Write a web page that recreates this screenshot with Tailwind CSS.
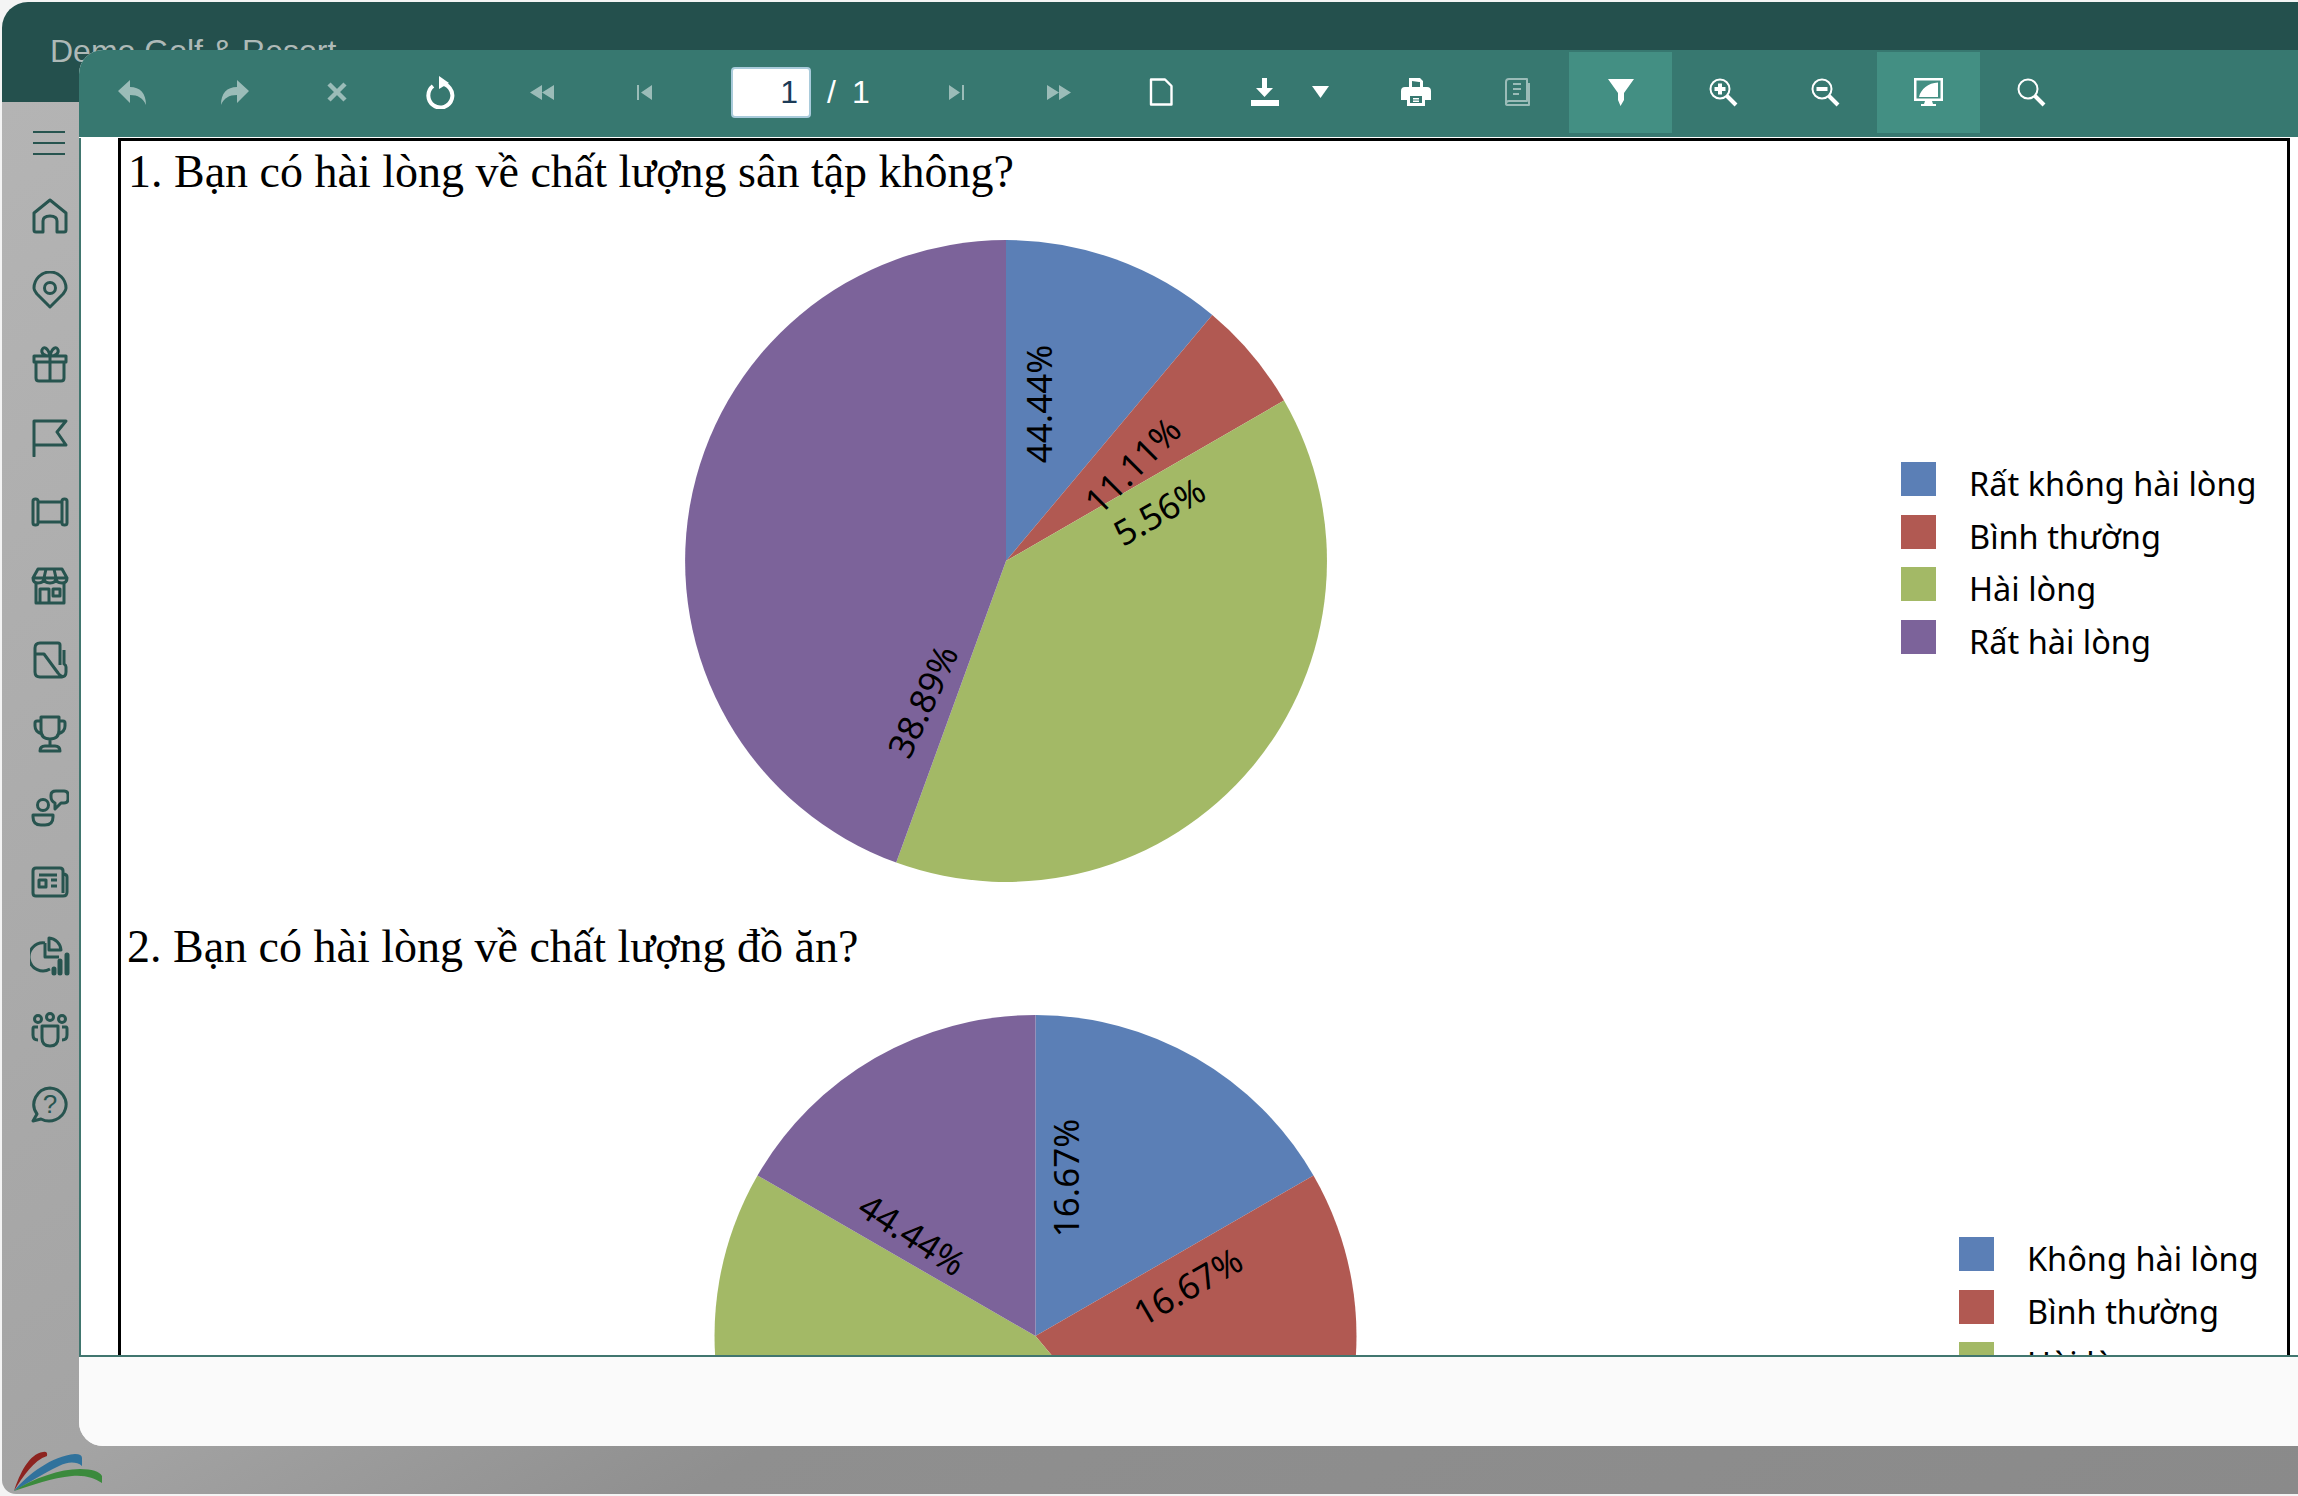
<!DOCTYPE html>
<html lang="en">
<head>
	<meta charset="UTF-8">
	<title>Demo Golf &amp; Resort</title>
	<script src="https://cdn.jsdelivr.net/npm/@tailwindcss/browser@4"></script>
</head>
<body class="bg-[#f4f4f4] w-[2298px] h-[1496px] overflow-hidden relative font-['Liberation_Sans',sans-serif]">
	<!-- page behind the dialog -->
	<div class="flex flex-col w-[2296px] h-[1492px] ml-[2px] mt-[2px] rounded-tl-[26px] rounded-bl-[14px] overflow-hidden">
		<div class="h-[100px] shrink-0 bg-[#24504d] pl-[48px] pt-[31px]">
			<span class="text-[32px] leading-[36px] text-[#aeb9b7]">Demo Golf &amp; Resort</span>
		</div>
		<div class="flex-1 bg-[linear-gradient(to_bottom_right,#b4b4b4,#a4a4a4_50%,#8f8f8f_65%,#8a8a8a)] relative">
			<div class="flex flex-col items-center w-[96px] pt-[3px] text-[#27544f]">
				<div class="h-[74px] flex items-start justify-center w-full pt-[25px] pr-[2px]">
					<svg width="34" height="26" viewBox="0 0 34 26" fill="none" stroke="currentColor" stroke-width="2.2"><path d="M1 2H33M1 13H33M1 24H33"/></svg>
				</div>
				<div class="h-[74px] flex items-center justify-center w-full">
					<svg width="36" height="36" viewBox="0 0 36 36" fill="none" stroke="currentColor" stroke-width="3" stroke-linejoin="round"><path d="M18 2L34 15V32Q34 34 32 34H25V23Q25 18 18 18Q11 18 11 23V34H4Q2 34 2 32V15Z"/></svg>
				</div>
				<div class="h-[74px] flex items-center justify-center w-full">
					<svg width="36" height="38" viewBox="0 0 36 38" fill="none" stroke="currentColor" stroke-width="3" stroke-linejoin="round"><path d="M18 36L5 23Q2 19 2 17A16 16 0 0 1 34 17Q34 19 31 23Z"/><circle cx="18" cy="17" r="5.5"/></svg>
				</div>
				<div class="h-[74px] flex items-center justify-center w-full">
					<svg width="36" height="38" viewBox="0 0 36 38" fill="none" stroke="currentColor" stroke-width="3" stroke-linejoin="round"><path d="M2 11H34V17H2ZM4 17V33Q4 36 7 36H29Q32 36 32 33V17M18 11V36M18 11C12 11 9 8 10 5C11 1 16 2 18 11C20 2 25 1 26 5C27 8 24 11 18 11Z"/></svg>
				</div>
				<div class="h-[74px] flex items-center justify-center w-full">
					<svg width="36" height="38" viewBox="0 0 36 38" fill="none" stroke="currentColor" stroke-width="3" stroke-linejoin="round" stroke-linecap="round"><path d="M2 37V2H34L25 13L34 26H2"/></svg>
				</div>
				<div class="h-[74px] flex items-center justify-center w-full">
					<svg width="38" height="30" viewBox="0 0 38 30" fill="none" stroke="currentColor" stroke-width="3" stroke-linejoin="round"><path d="M7 5H31M7 25H31"/><path d="M2 4Q2 2 4.5 2Q7 2 7 4V26Q7 28 4.5 28Q2 28 2 26ZM31 4Q31 2 33.5 2Q36 2 36 4V26Q36 28 33.5 28Q31 28 31 26Z"/></svg>
				</div>
				<div class="h-[74px] flex items-center justify-center w-full">
					<svg width="38" height="38" viewBox="0 0 38 38" fill="none" stroke="currentColor" stroke-width="3" stroke-linejoin="round"><path d="M7 2H31L36 11Q36 16 31 16Q25 16 25 11Q25 16 19 16Q13 16 13 11Q13 16 7 16Q2 16 2 11ZM13 11L15 2M25 11L23 2M2 11H36"/><path d="M5 16V36H33V16M9 36V22H18V36M22 22H29V29H22Z"/></svg>
				</div>
				<div class="h-[74px] flex items-center justify-center w-full">
					<svg width="36" height="38" viewBox="0 0 36 38" fill="none" stroke="currentColor" stroke-width="3" stroke-linejoin="round"><path d="M28 24V4Q28 2 26 2H8Q3 2 3 7V31Q3 36 8 36H29Q34 36 34 31V26Q34 24 32 23V9M3 13H12L26 32Q28 35 31 36"/></svg>
				</div>
				<div class="h-[74px] flex items-center justify-center w-full">
					<svg width="34" height="38" viewBox="0 0 34 38" fill="none" stroke="currentColor" stroke-width="3" stroke-linejoin="round"><path d="M8 2H26V15Q26 24 17 24Q8 24 8 15ZM8 6H4Q2 6 2 8V11Q2 17 9 19M26 6H30Q32 6 32 8V11Q32 17 25 19M17 24V31M7 36Q7 31 12 31H22Q27 31 27 36Z"/></svg>
				</div>
				<div class="h-[74px] flex items-center justify-center w-full">
					<svg width="38" height="38" viewBox="0 0 38 38" fill="none" stroke="currentColor" stroke-width="3" stroke-linejoin="round"><path d="M25 2H33Q37 2 37 6V10Q37 14 33 14H30L24 20L24 14Q20 12 20 8V6Q20 2 25 2Z"/><circle cx="12" cy="16" r="5.5"/><path d="M2 26H22V28Q22 36 14 36H10Q2 36 2 28Z"/></svg>
				</div>
				<div class="h-[74px] flex items-center justify-center w-full">
					<svg width="38" height="32" viewBox="0 0 38 32" fill="none" stroke="currentColor" stroke-width="3" stroke-linejoin="round"><path d="M32 8V5Q32 2 29 2H5Q2 2 2 5V27Q2 30 5 30H32Q36 30 36 26V11Q36 8 32 8V27"/><path d="M8 9H26M8 14H15V21H8ZM20 14H26M20 20H26"/></svg>
				</div>
				<div class="h-[74px] flex items-center justify-center w-full">
					<svg width="40" height="40" viewBox="0 0 40 40" fill="none" stroke="currentColor" stroke-width="3" stroke-linejoin="round"><path d="M15 7A14 14 0 1 0 20 33M15 7V21H29M19 2A13 13 0 0 1 31 14H19Z"/><path d="M24 37V33M30 37V25M37 37V19" stroke-width="5" stroke-linecap="round"/></svg>
				</div>
				<div class="h-[74px] flex items-center justify-center w-full">
					<svg width="38" height="36" viewBox="0 0 38 36" fill="none" stroke="currentColor" stroke-width="3" stroke-linejoin="round"><circle cx="19" cy="5" r="3.5"/><circle cx="7" cy="7" r="3.5"/><circle cx="31" cy="7" r="3.5"/><path d="M11 14H27V26Q27 34 19 34Q11 34 11 26ZM7 15H3Q2 15 2 17V23Q2 28 7 28M31 15H35Q36 15 36 17V23Q36 28 31 28"/></svg>
				</div>
				<div class="h-[74px] flex items-center justify-center w-full">
					<svg width="38" height="37" viewBox="0 0 38 37" fill="none" stroke="currentColor" stroke-width="3" stroke-linejoin="round"><path d="M19 2A17 16.5 0 1 1 10 33L2 35L6 28A17 16.5 0 0 1 19 2Z"/><text x="19" y="27" text-anchor="middle" font-size="26" fill="currentColor" stroke="none" font-family="Liberation Sans">?</text></svg>
				</div>
			</div>
			<!-- logo -->
			<svg class="absolute left-[10px] bottom-[2px]" width="96" height="44" viewBox="0 0 96 44">
				<path d="M2 43C8 25 17 6 31 4Q36 3 35 8C22 12 11 28 2 43Z" fill="#8d2420"/>
				<path d="M2 43C16 26 40 8 63 6Q70 6 70 10V18C64 13 55 14 47 18C32 25 16 35 2 43Z" fill="#30729c"/>
				<path d="M2 43C22 30 48 21 68 21Q86 21 90 28V35C82 30 74 27 60 28C40 30 20 37 2 43Z" fill="#3b8a3c"/>
			</svg>
		</div>
	</div>

	<!-- report dialog -->
	<div class="absolute left-[79px] top-[50px] right-0 bottom-[50px] flex flex-col rounded-tl-[24px] rounded-bl-[24px] overflow-hidden bg-[#fafafa]">
		<div class="h-[88px] shrink-0 bg-[#377870] flex items-center pl-[2px] pb-[3px] border-b border-white text-white">
			<button class="w-[102.5px] h-full flex items-center justify-center opacity-50">
				<svg width="28" height="25" viewBox="0 0 28 25" fill="currentColor"><path d="M0 11L12 0V7C22 7 28 13 28 25C25 18 20 15 12 15V23Z"/></svg>
			</button>
			<button class="w-[102.5px] h-full flex items-center justify-center opacity-50">
				<svg width="28" height="25" viewBox="0 0 28 25" fill="currentColor"><path d="M28 11L16 0V7C6 7 0 13 0 25C3 18 8 15 16 15V23Z"/></svg>
			</button>
			<button class="w-[102.5px] h-full flex items-center justify-center opacity-50">
				<svg width="20" height="20" viewBox="0 0 20 20" fill="none" stroke="currentColor" stroke-width="4.5"><path d="M2 2L18 18M18 2L2 18"/></svg>
			</button>
			<button class="w-[102.5px] h-full flex items-center justify-center">
				<svg width="30" height="33" viewBox="0 0 30 33" fill="none" stroke="currentColor" stroke-width="4"><path d="M8 10A12 12 0 1 0 15 7.5"/><path d="M14 0L24 7L14 13Z" fill="currentColor" stroke="none"/></svg>
			</button>
			<button class="w-[102.5px] h-full flex items-center justify-center opacity-50">
				<svg width="24" height="15" viewBox="0 0 24 15" fill="currentColor"><path d="M12 0V15L0 7.5ZM24 0V15L12 7.5Z"/></svg>
			</button>
			<button class="w-[102.5px] h-full flex items-center justify-center opacity-50">
				<svg width="15" height="15" viewBox="0 0 15 15" fill="currentColor"><path d="M0 0H2V15H0ZM15 0V15L4 7.5Z"/></svg>
			</button>
			<div class="w-[209px] h-full flex items-center pl-[35px]">
				<input value="1" class="w-[80px] h-[51px] bg-white rounded-[4px] border-2 border-[#a9cbdb] text-right pr-[11px] text-[32px] text-[#1c3b57]">
				<span class="ml-[16px] text-[32px] leading-none">/</span>
				<span class="ml-[16px] text-[32px] leading-none">1</span>
			</div>
			<button class="w-[102.5px] h-full flex items-center justify-center opacity-50">
				<svg width="15" height="15" viewBox="0 0 15 15" fill="currentColor"><path d="M13 0H15V15H13ZM0 0V15L11 7.5Z"/></svg>
			</button>
			<button class="w-[102.5px] h-full flex items-center justify-center opacity-50">
				<svg width="24" height="15" viewBox="0 0 24 15" fill="currentColor"><path d="M0 0V15L12 7.5ZM12 0V15L24 7.5Z"/></svg>
			</button>
			<button class="w-[102.5px] h-full flex items-center justify-center">
				<svg width="24" height="28" viewBox="0 0 24 28" fill="none" stroke="currentColor" stroke-width="2.4" stroke-linejoin="round"><path d="M2 1.5H16L22.5 8V26.5H2Z"/></svg>
			</button>
			<button class="w-[152px] h-full flex items-center pl-[38px]">
				<svg width="28" height="28" viewBox="0 0 28 28" fill="currentColor"><path d="M11 0H16V10H22L13.5 19L5 10H11ZM0 22H28V28H0Z"/></svg>
				<svg class="ml-[33px]" width="17" height="12" viewBox="0 0 17 12" fill="currentColor"><path d="M0 0H17L8.5 12Z"/></svg>
			</button>
			<button class="w-[102px] h-full flex items-center justify-center">
				<svg width="30" height="28" viewBox="0 0 30 28" fill="currentColor"><path fill-rule="evenodd" d="M8 0H19L22 3V9H26Q30 9 30 13V22H24V28H6V22H0V13Q0 9 4 9H8ZM11 3V9H19V4H18ZM9 18V25H21V18ZM12 20H18V21.5H12ZM12 22.5H18V24H12Z"/></svg>
			</button>
			<button class="w-[102.5px] h-full flex items-center justify-center opacity-50">
				<svg width="25" height="28" viewBox="0 0 25 28" fill="none" stroke="currentColor" stroke-width="2" stroke-linejoin="round"><path d="M4 1H22V23H4Q1 23 1 26V4Q1 1 4 1ZM1 26Q1 27 3 27H24V5M8 6H16M8 11H16M8 16H14"/></svg>
			</button>
			<button class="w-[103px] h-[81px] flex items-center justify-center bg-[#438f83]">
				<svg width="26" height="27" viewBox="0 0 26 27" fill="currentColor"><path d="M0 0H26L16 14V21L12.5 27L10 21V14Z"/></svg>
			</button>
			<button class="w-[103px] h-full flex items-center justify-center">
				<svg width="30" height="29" viewBox="0 0 30 29" fill="none" stroke="currentColor"><circle cx="11" cy="11" r="9.5" stroke-width="2"/><path d="M11 5.5V16.5M5.5 11H16.5" stroke-width="4"/><path d="M18 18L27 27" stroke-width="4"/></svg>
			</button>
			<button class="w-[102px] h-full flex items-center justify-center">
				<svg width="30" height="29" viewBox="0 0 30 29" fill="none" stroke="currentColor"><circle cx="11" cy="11" r="9.5" stroke-width="2"/><path d="M5.5 11H16.5" stroke-width="4"/><path d="M18 18L27 27" stroke-width="4"/></svg>
			</button>
			<button class="w-[103px] h-[81px] flex items-center justify-center bg-[#438f83]">
				<svg width="29" height="28" viewBox="0 0 29 28" fill="currentColor"><path fill-rule="evenodd" d="M0 0H29V23H18L19 26H22V28H7V26H10L11 23H0ZM2.5 2.5V20.5H26.5V2.5ZM5 19C7 11 14 5 24 4.5V19Z"/></svg>
			</button>
			<button class="w-[103px] h-full flex items-center justify-center">
				<svg width="30" height="29" viewBox="0 0 30 29" fill="none" stroke="currentColor"><circle cx="11" cy="11" r="9.5" stroke-width="2"/><path d="M18 18L27 27" stroke-width="4"/></svg>
			</button>
		</div>

		<div class="h-[1219px] shrink-0 bg-white border-l-2 border-b-2 border-[#41766f] overflow-hidden pl-[37px] text-black">
			<div class="w-[2172px] h-[1400px] border-[3px] border-black">
				<!-- question 1 -->
				<p class="h-[62px] pl-[7px] font-['Liberation_Serif',serif] text-[46px] leading-[62px]">1. Bạn có hài lòng về chất lượng sân tập không?</p>
				<div class="h-[713px] flex items-start">
					<svg class="shrink-0" width="1400" height="713" viewBox="0 0 1400 713" font-family="Noto Sans" font-size="35" text-anchor="middle" dominant-baseline="central">
						<g transform="translate(885 358)">
							<path d="M0 0V-321A321 321 0 0 1 206.3 -245.9Z" fill="#5b7fb6"/>
							<path d="M0 0L206.3 -245.9A321 321 0 0 1 278 -160.5Z" fill="#b15952"/>
							<path d="M0 0L278 -160.5A321 321 0 0 1 -109.8 301.6Z" fill="#a3b966"/>
							<path d="M0 0L-109.8 301.6A321 321 0 0 1 0 -321Z" fill="#7c639a"/>
							<text transform="translate(32 -157) rotate(-90)">44.44%</text>
							<text transform="translate(126 -96) rotate(-45)">11.11%</text>
							<text transform="translate(153 -50) rotate(-30)">5.56%</text>
							<text transform="translate(-84 140) rotate(-65)">38.89%</text>
						</g>
					</svg>
					<ul class="ml-[380px] mt-[259px] text-[32.5px] font-['Noto_Sans',sans-serif]">
						<li class="h-[52.7px] flex items-start gap-[33px]"><span class="w-[35px] h-[34px] bg-[#5b7fb6]"></span><span class="leading-[44px] whitespace-nowrap">Rất không hài lòng</span></li>
						<li class="h-[52.7px] flex items-start gap-[33px]"><span class="w-[35px] h-[34px] bg-[#b15952]"></span><span class="leading-[44px] whitespace-nowrap">Bình thường</span></li>
						<li class="h-[52.7px] flex items-start gap-[33px]"><span class="w-[35px] h-[34px] bg-[#a3b966]"></span><span class="leading-[44px] whitespace-nowrap">Hài lòng</span></li>
						<li class="h-[52.7px] flex items-start gap-[33px]"><span class="w-[35px] h-[34px] bg-[#7c639a]"></span><span class="leading-[44px] whitespace-nowrap">Rất hài lòng</span></li>
					</ul>
				</div>
				<!-- question 2 -->
				<p class="h-[62px] pl-[6px] font-['Liberation_Serif',serif] text-[46px] leading-[62px]">2. Bạn có hài lòng về chất lượng đồ ăn?</p>
				<div class="h-[713px] flex items-start">
					<svg class="shrink-0" width="1400" height="713" viewBox="0 0 1400 713" font-family="Noto Sans" font-size="35" text-anchor="middle" dominant-baseline="central">
						<g transform="translate(914.5 358)">
							<path d="M0 0V-321A321 321 0 0 1 278 -160.5Z" fill="#5b7fb6"/>
							<path d="M0 0L278 -160.5A321 321 0 0 1 206.3 245.9Z" fill="#b15952"/>
							<path d="M0 0L206.3 245.9A321 321 0 0 1 -278 -160.5Z" fill="#a3b966"/>
							<path d="M0 0L-278 -160.5A321 321 0 0 1 0 -321Z" fill="#7c639a"/>
							<text transform="translate(30 -158) rotate(-90)">16.67%</text>
							<text transform="translate(152 -50) rotate(-30)">16.67%</text>
							<text transform="translate(-123 -102) rotate(33)">44.44%</text>
						</g>
					</svg>
					<ul class="ml-[438px] mt-[259px] text-[32.5px] font-['Noto_Sans',sans-serif]">
						<li class="h-[52.7px] flex items-start gap-[33px]"><span class="w-[35px] h-[34px] bg-[#5b7fb6]"></span><span class="leading-[44px] whitespace-nowrap">Không hài lòng</span></li>
						<li class="h-[52.7px] flex items-start gap-[33px]"><span class="w-[35px] h-[34px] bg-[#b15952]"></span><span class="leading-[44px] whitespace-nowrap">Bình thường</span></li>
						<li class="h-[52.7px] flex items-start gap-[33px]"><span class="w-[35px] h-[34px] bg-[#a3b966]"></span><span class="leading-[44px] whitespace-nowrap">Hài lòng</span></li>
					</ul>
				</div>
			</div>
		</div>
		<div class="flex-1 bg-[#fafafa]"></div>
	</div>
</body>
</html>
